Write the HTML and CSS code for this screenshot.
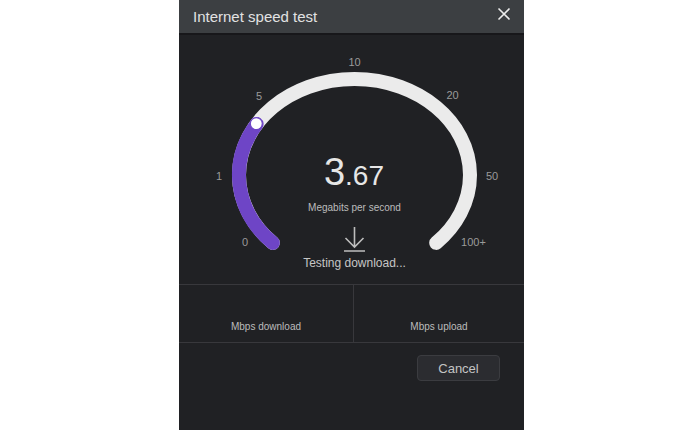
FILE: index.html
```html
<!DOCTYPE html>
<html>
<head>
<meta charset="utf-8">
<link rel="stylesheet" href="styles.css">
</head>
<body>
<div class="panel">
  <div class="header">
    <span class="title">Internet speed test</span>
    <svg class="close" width="14" height="14" viewBox="0 0 14 14"><path d="M1.5 1.5 L12.5 12.5 M12.5 1.5 L1.5 12.5" stroke="#ececec" stroke-width="1.6" fill="none"/></svg>
  </div>
  <div class="gauge">
    <svg width="345" height="249" viewBox="0 0 345 249">
      <path d="M 93.8 207.9 A 115.5 96 0 1 1 257.2 207.9" fill="none" stroke="#ebebeb" stroke-width="14" stroke-linecap="round"/>
      <path d="M 93.8 207.9 A 115.5 96 0 0 1 77.6 89.1" fill="none" stroke="#6e45c6" stroke-width="14" stroke-linecap="round"/>
      <circle cx="77.3" cy="88.6" r="6" fill="#ffffff" stroke="#6e45c6" stroke-width="1.2"/>
      <g class="ticks" text-anchor="middle">
        <text x="175.5" y="31">10</text>
        <text x="80" y="65">5</text>
        <text x="273.5" y="64">20</text>
        <text x="40" y="145">1</text>
        <text x="313" y="145">50</text>
        <text x="66" y="211">0</text>
        <text x="294.5" y="211">100+</text>
      </g>
      <text class="value" x="175" y="150" text-anchor="middle"><tspan class="int">3</tspan><tspan class="dec">.67</tspan></text>
      <text class="unit" x="175.5" y="175.5" text-anchor="middle">Megabits per second</text>
      <path d="M175.5 192 V212 M166.5 203 L175.5 212 L184.5 203 M165 216 H186" fill="none" stroke="#bdbdbd" stroke-width="1.6"/>
      <text class="status" x="175.5" y="232" text-anchor="middle">Testing download...</text>
    </svg>
  </div>
  <div class="stats">
    <div class="cell left"><span>Mbps download</span></div>
    <div class="cell"><span>Mbps upload</span></div>
  </div>
  <div class="footer">
    <button class="cancel">Cancel</button>
  </div>
</div>
</body>
</html>
```
FILE: styles.css
```css
html, body {
  margin: 0;
  padding: 0;
  background: #ffffff;
  font-family: "Liberation Sans", Arial, sans-serif;
}
.panel {
  margin-left: 179px;
  width: 345px;
  height: 430px;
  background: #202124;
  display: flex;
  flex-direction: column;
}
.header {
  height: 33px;
  background: #3c3f42;
  border-bottom: 2px solid #17171a;
  display: flex;
  align-items: center;
  justify-content: space-between;
  padding: 0 13px 0 14px;
}
.title {
  color: #e2e2e2;
  font-size: 15px;
  padding-bottom: 1px;
}
.close {
  margin-top: -5px;
}
.gauge {
  height: 249px;
  display: flex;
}
.ticks text {
  fill: #9a9a9a;
  font-size: 11px;
}
.value {
  fill: #e6e6e6;
}
.int {
  font-size: 38px;
}
.dec {
  font-size: 28px;
}
.unit {
  fill: #bcbcbc;
  font-size: 10px;
}
.status {
  fill: #c6c6c6;
  font-size: 12px;
}
.stats {
  display: flex;
  height: 57px;
  border-top: 1px solid #38383c;
  border-bottom: 1px solid #38383c;
}
.cell {
  display: flex;
  align-items: flex-end;
  justify-content: center;
  padding-bottom: 10px;
  box-sizing: border-box;
  width: 170px;
  color: #bcbcbc;
  font-size: 10px;
}
.cell.left {
  width: 175px;
  border-right: 1px solid #38383c;
}
.footer {
  display: flex;
  justify-content: flex-end;
  padding: 12px 24px 0 0;
}
.cancel {
  width: 83px;
  height: 26px;
  background: #2b2c30;
  border: 1px solid #3b3c40;
  border-radius: 4px;
  color: #c4c4c4;
  font-family: "Liberation Sans", Arial, sans-serif;
  font-size: 13px;
  padding: 0;
}
```
